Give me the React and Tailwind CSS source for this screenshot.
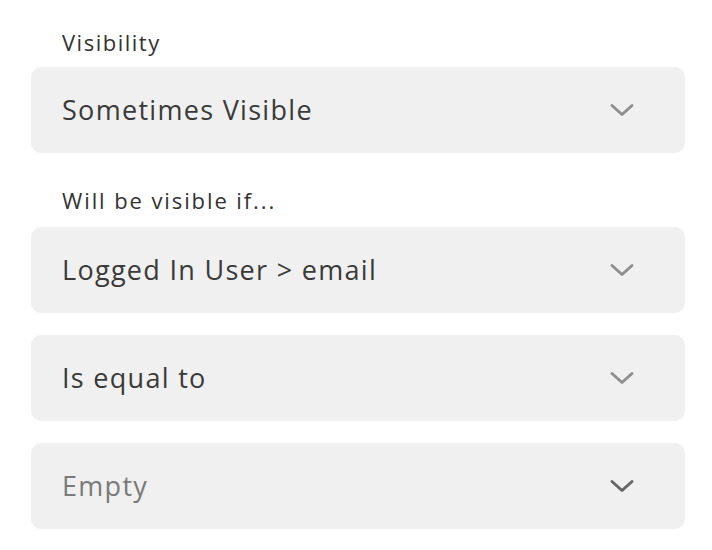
import React from "react";

function Chevron({ dark }) {
  return (
    <svg width="26" height="16" viewBox="0 0 26 16" fill="none" className="shrink-0">
      <path
        d="M3 3.5 L13 12.5 L23 3.5"
        stroke={dark ? "#666666" : "#8f8f8f"}
        strokeWidth="3"
        strokeLinecap="round"
        strokeLinejoin="round"
      />
    </svg>
  );
}

function Select({ value, muted, darkIcon }) {
  return (
    <div className="h-[86px] rounded-[10px] bg-[#f0f0f0] flex items-center justify-between pl-[31px] pr-[50px]">
      <span className={`text-[27px] tracking-[1.3px] ${muted ? "text-[#7a7a7a]" : "text-[#3a3a3a]"}`}>
        {value}
      </span>
      <Chevron dark={darkIcon} />
    </div>
  );
}

export default function App() {
  return (
    <div
      className="min-h-screen bg-white pl-[31px] pr-[27px] pt-[28px]"
      style={{ fontFamily: '"Open Sans", "Liberation Sans", sans-serif' }}
    >
      <div className="text-[22px] leading-[28px] tracking-[1.5px] text-[#333333] pl-[31px] mb-[11px]">
        Visibility
      </div>
      <Select value="Sometimes Visible" />

      <div className="text-[22px] leading-[28px] tracking-[1.9px] text-[#333333] pl-[31px] mt-[33px] mb-[13px]">
        Will be visible if...
      </div>
      <div className="flex flex-col gap-[22px]">
        <Select value="Logged In User > email" />
        <Select value="Is equal to" />
        <Select value="Empty" muted darkIcon />
      </div>
    </div>
  );
}
